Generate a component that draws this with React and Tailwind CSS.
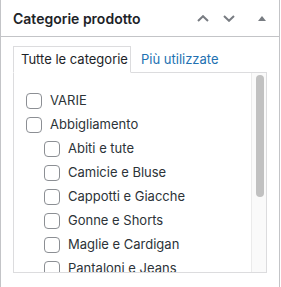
import React from "react";

const items = [
  { label: "VARIE", level: 0 },
  { label: "Abbigliamento", level: 0 },
  { label: "Abiti e tute", level: 1 },
  { label: "Camicie e Bluse", level: 1 },
  { label: "Cappotti e Giacche", level: 1 },
  { label: "Gonne e Shorts", level: 1 },
  { label: "Maglie e Cardigan", level: 1 },
  { label: "Pantaloni e Jeans", level: 1 },
];

export default function App() {
  return (
    <div
      className="w-[281px] h-[287px] bg-white overflow-hidden"
      style={{ fontFamily: "Inter, 'Noto Sans', sans-serif" }}
    >
      <div className="w-[280px] h-[287px] border-x border-[#c3c4c7] bg-white">
        <div className="h-[37px] border-b border-[#c3c4c7] flex items-center pl-[12px] pr-[12px]">
          <h2 className="text-[14px] font-semibold text-[#1d2327] flex-1 leading-none pt-[1px]">
            Categorie prodotto
          </h2>
          <div className="flex items-center">
            <svg width="12" height="7" viewBox="0 0 12 7" className="mr-[14px]">
              <path d="M1 6 L6 1.2 L11 6" fill="none" stroke="#787c82" strokeWidth="2" />
            </svg>
            <svg width="12" height="7" viewBox="0 0 12 7" className="mr-[23px]">
              <path d="M1 1 L6 5.8 L11 1" fill="none" stroke="#787c82" strokeWidth="2" />
            </svg>
            <svg width="8" height="5" viewBox="0 0 8 5" className="mr-[1px]">
              <path d="M0 5 L4 0 L8 5 Z" fill="#787c82" />
            </svg>
          </div>
        </div>
        <div className="px-[12px] pt-[9px]">
          <div className="flex items-end h-[27px]">
            <div className="relative z-10 h-[27px] w-[118px] border-t border-x border-b border-[#dcdcde] border-b-white bg-white text-[13px] text-[#1d2327] pl-[7px] flex items-center">
              Tutte le categorie
            </div>
            <div className="h-[26px] pl-[10px] text-[13px] text-[#2271b1] flex items-center">
              Più utilizzate
            </div>
          </div>
          <div className="-mt-px h-[201px] border border-[#dcdcde] flex">
            <div className="flex-1 overflow-hidden pl-[12px] pt-[16px]">
              {items.map((it) => (
                <div
                  key={it.label}
                  className={
                    "h-[24px] flex items-center " + (it.level === 1 ? "pl-[18px]" : "")
                  }
                >
                  <span className="w-[16px] h-[16px] shrink-0 rounded-[4px] border border-[#8c8f94] bg-white mr-[8px]" />
                  <span className="text-[13px] text-[#2c3338] whitespace-nowrap">{it.label}</span>
                </div>
              ))}
            </div>
            <div className="w-[15px] border-l border-[#ebebeb] bg-[#fafafa] pt-[2px] flex justify-center">
              <div className="w-[8px] h-[122px] rounded-full bg-[#c1c1c1] ml-px" />
            </div>
          </div>
        </div>
      </div>
    </div>
  );
}
